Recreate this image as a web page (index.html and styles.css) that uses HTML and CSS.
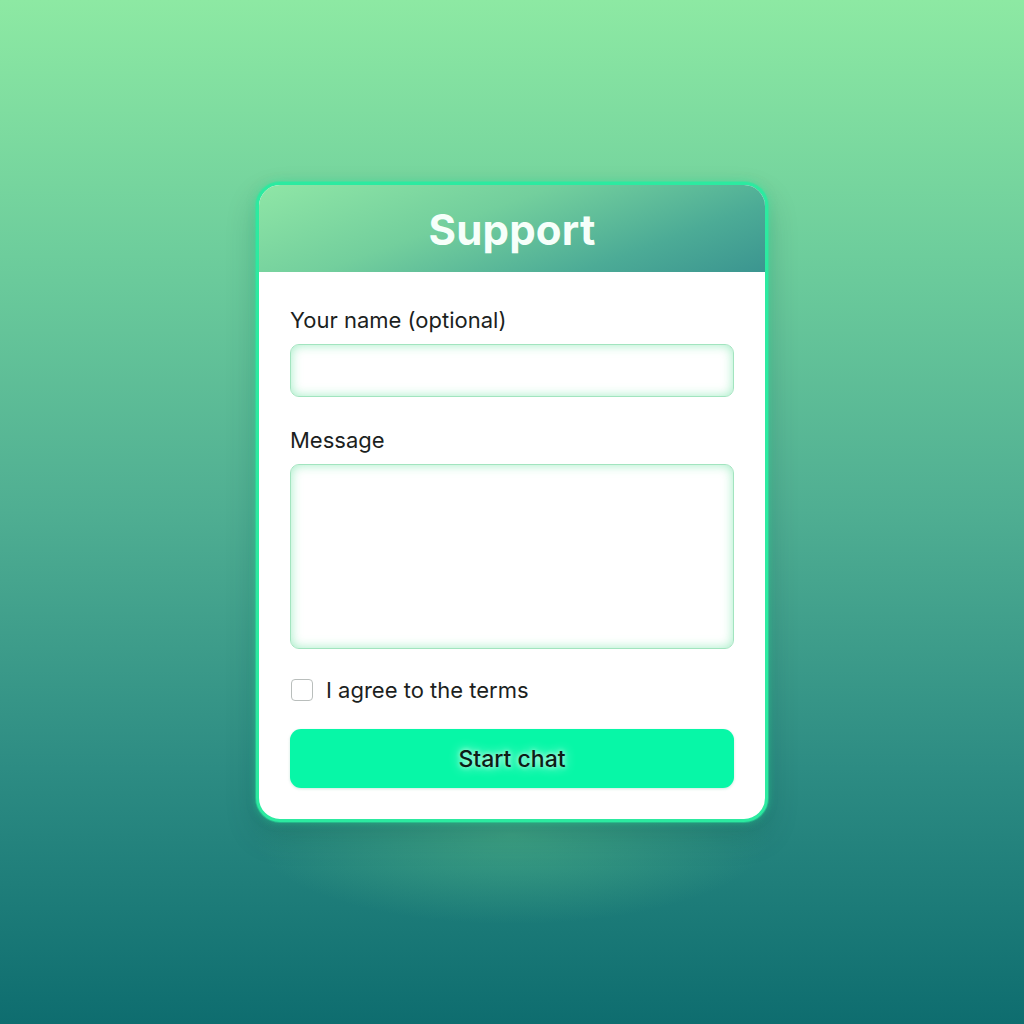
FILE: index.html
```html
<!DOCTYPE html>
<html lang="en">
<head>
  <meta charset="UTF-8">
  <title>Support</title>
  <link rel="stylesheet" href="styles.css">
</head>
<body>
  <div class="card">
    <div class="card-head">
      <h1>Support</h1>
    </div>
    <form class="card-body">
      <label class="field-label" for="name">Your name (optional)</label>
      <input class="input" id="name" type="text">

      <label class="field-label msg-label" for="msg">Message</label>
      <textarea class="input textarea" id="msg"></textarea>

      <label class="agree">
        <span class="check"></span>
        I agree to the terms
      </label>

      <button class="start-btn" type="button"><span>Start chat</span></button>
    </form>
  </div>
</body>
</html>
```

FILE: styles.css
```css
html, body {
  height: 100%;
}

body {
  margin: 0;
  padding: 0;
  background: linear-gradient(180deg, #8de9a3 0%, #6dcd9c 25%, #4fae92 50%, #2d8c83 75%, #0e6d6f 100%);
  font-family: Inter, "Noto Sans", sans-serif;
  display: flex;
  justify-content: center;
  align-items: flex-start;
  min-height: 1024px;
  position: relative;
}

body::after {
  content: "";
  position: absolute;
  left: 250px;
  top: 745px;
  width: 524px;
  height: 180px;
  border-radius: 50%;
  background: radial-gradient(ellipse at center, rgba(100, 205, 140, 0.4), rgba(100, 205, 140, 0) 70%);
  pointer-events: none;
}

.card {
  margin-top: 182px;
  width: 506px;
  background: #fff;
  border: 3px solid #2ceaa0;
  border-radius: 24px;
  overflow: hidden;
  box-shadow: 0 0 0 1px rgba(40, 235, 160, 0.4), 0 0 8px rgba(40, 235, 160, 0.5), 0 14px 30px rgba(10, 70, 60, 0.22);
  position: relative;
  z-index: 1;
}

.card-head {
  height: 87px;
  background: linear-gradient(160deg, #8fe6a6 0%, #73cf9d 40%, #4cab96 75%, #3b9590 100%);
  display: flex;
  align-items: center;
  justify-content: center;
}

.card-head h1 {
  margin: 0;
  color: #f6fffa;
  font-size: 42px;
  font-weight: 700;
  letter-spacing: 0.2px;
  padding-top: 2px;
}

.card-body {
  display: flex;
  flex-direction: column;
  padding: 35px 31px 31px;
}

.field-label {
  font-size: 22px;
  color: #1c1f1e;
  line-height: 26px;
}

.msg-label {
  margin-top: 30px;
}

.input {
  margin-top: 11px;
  height: 53px;
  box-sizing: border-box;
  border: 1.5px solid #a2e4bf;
  border-radius: 9px;
  background: #fff;
  box-shadow: inset 0 0 11px rgba(110, 228, 165, 0.65);
  outline: none;
  font: inherit;
}

.textarea {
  height: 185px;
  resize: none;
}

.agree {
  margin-top: 30px;
  display: flex;
  align-items: center;
  gap: 13px;
  font-size: 22px;
  line-height: 22px;
  color: #1c1f1e;
}

.check {
  width: 22px;
  height: 22px;
  box-sizing: border-box;
  border: 1.5px solid #b9bebc;
  border-radius: 4px;
  background: #fff;
  margin-left: 1px;
}

.start-btn {
  margin-top: 28px;
  height: 59px;
  border: none;
  border-radius: 11px;
  background: #07f7a7;
  color: #0d1c16;
  font-family: Inter, "Noto Sans", sans-serif;
  font-size: 23px;
  font-weight: 500;
  cursor: pointer;
  box-shadow: 0 1px 3px rgba(0, 150, 100, 0.2);
}

.start-btn span {
  text-shadow: 0 0 12px rgba(225, 255, 242, 1), 0 0 5px rgba(225, 255, 242, 0.85);
}
```
